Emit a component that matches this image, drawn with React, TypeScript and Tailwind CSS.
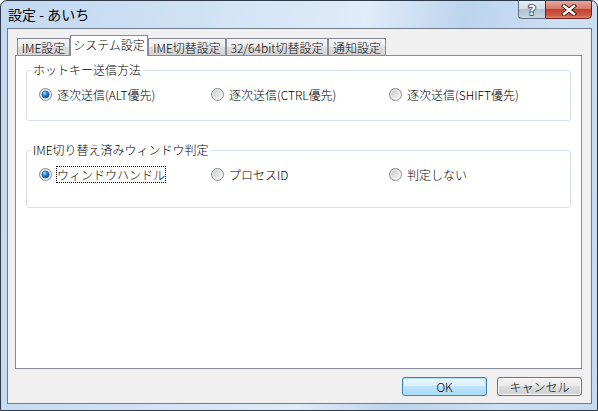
import React from "react";

const tabs = [
  { label: "IME設定", w: "w-[53px]" },
  { label: "システム設定", w: "w-[78px]", active: true },
  { label: "IME切替設定", w: "w-[78px]" },
  { label: "32/64bit切替設定", w: "w-[102px]" },
  { label: "通知設定", w: "w-[58px]" },
];

const Radio = ({ checked, id }: { checked?: boolean; id: string }) => (
  <svg width="13" height="13" viewBox="0 0 13 13" className="shrink-0">
    <defs>
      <linearGradient id={`bg-${id}`} x1="0" y1="0" x2="1" y2="1">
        <stop offset="0" stopColor="#d6d6d6" />
        <stop offset="1" stopColor="#ffffff" />
      </linearGradient>
      <linearGradient id={`in-${id}`} x1="0" y1="0" x2="1" y2="1">
        <stop offset="0" stopColor="#c9cdd2" />
        <stop offset="1" stopColor="#f4f4f4" />
      </linearGradient>
      <radialGradient id={`dot-${id}`} cx="0.35" cy="0.3" r="0.75">
        <stop offset="0" stopColor="#9fe0ff" />
        <stop offset="0.45" stopColor="#2c8ad8" />
        <stop offset="1" stopColor="#0c3f8a" />
      </radialGradient>
    </defs>
    <circle cx="6.5" cy="6.5" r="6" fill={`url(#bg-${id})`} stroke="#8c8f94" />
    {checked ? (
      <circle cx="6.5" cy="6.5" r="3.6" fill={`url(#dot-${id})`} stroke="#1b4f8f" strokeWidth="0.6" />
    ) : (
      <circle cx="6.5" cy="6.5" r="3.8" fill={`url(#in-${id})`} />
    )}
  </svg>
);

const Option = ({
  id,
  label,
  checked,
  focused,
  w,
}: {
  id: string;
  label: string;
  checked?: boolean;
  focused?: boolean;
  w?: string;
}) => (
  <div className={`flex items-center h-[13px] ${w ?? ""}`}>
    <Radio id={id} checked={checked} />
    <span
      className={
        focused
          ? "ml-[4px] leading-[15px] border border-dotted border-black"
          : "ml-[5px] leading-[15px]"
      }
    >
      {label}
    </span>
  </div>
);

const Group = ({
  title,
  h,
  mt,
  pt,
  children,
}: {
  title: string;
  h: string;
  mt: string;
  pt: string;
  children: React.ReactNode;
}) => (
  <fieldset className={`border border-[#d5dfe5] rounded-[3px] ${h} ${mt}`}>
    <legend className="ml-[4px] px-[2px] text-[12px] leading-[14px]">{title}</legend>
    <div className={`flex items-center pl-[12px] ${pt}`}>{children}</div>
  </fieldset>
);

export default function App() {
  return (
    <div className="w-[598px] h-[411px] flex flex-col border border-[#2d3a4b] rounded-t-[7px] bg-[linear-gradient(100deg,#c2d9f1_0%,#cfe2f5_30%,#dfecf9_55%,#bcd4ee_70%,#cde0f4_85%,#c4daf1_100%)] font-['Noto_Sans_CJK_JP',sans-serif] font-light text-[12px] text-black overflow-hidden">
      {/* title bar */}
      <div className="h-[27px] flex items-start shrink-0">
        <div className="ml-[7px] mt-[5px] text-[14px] leading-[16px] font-normal">設定 - あいち</div>
        <div className="ml-auto mr-[5px] -mt-[1px] flex">
          <div className="w-[27px] h-[19px] border border-[#5f7187] border-r-0 rounded-bl-[4px] bg-[linear-gradient(#e6edf4,#d0dbe6_45%,#b4c3d3_50%,#c7d4e1)] flex items-center justify-center">
            <svg width="14" height="14" viewBox="0 0 14 14">
              <text
                x="7"
                y="12"
                textAnchor="middle"
                fontFamily="DejaVu Sans, sans-serif"
                fontWeight="bold"
                fontSize="14"
                fill="#ffffff"
                stroke="#3a4a5e"
                strokeWidth="1.6"
                paintOrder="stroke"
              >
                ?
              </text>
            </svg>
          </div>
          <div className="w-[47px] h-[19px] border border-[#6b2419] rounded-br-[4px] bg-[linear-gradient(#e9a99b,#d6786a_45%,#c3412e_50%,#cf5d47_85%,#dc8c6e)] flex items-center justify-center">
            <svg width="16" height="12" viewBox="0 0 16 12">
              <path d="M3 2 L13 10 M13 2 L3 10" stroke="#3b1a16" strokeWidth="4.2" strokeLinecap="square" />
              <path d="M3 2 L13 10 M13 2 L3 10" stroke="#ffffff" strokeWidth="2.4" strokeLinecap="square" />
            </svg>
          </div>
        </div>
      </div>

      {/* client area */}
      <div className="flex-1 ml-[6px] mr-[5px] mb-[6px] border border-[#6e7a89] bg-[#f0f0f0] pl-[7px] pr-[9px] flex flex-col">
        <div className="h-[26px] flex items-end pl-[2px] shrink-0">
          {tabs.map((t) =>
            t.active ? (
              <div
                key={t.label}
                className={`${t.w} h-[21px] -mb-[1px] relative z-10 bg-white border border-[#898c95] border-b-0 flex justify-center pt-[1px] leading-[15px]`}
              >
                {t.label}
              </div>
            ) : (
              <div
                key={t.label}
                className={`${t.w} h-[17px] border border-[#898c95] border-b-0 bg-[linear-gradient(#f4f4f4,#ececec_50%,#dedede_50%,#d2d2d2)] flex items-center justify-center leading-[15px]`}
              >
                {t.label}
              </div>
            )
          )}
        </div>

        <div className="h-[314px] border border-[#898c95] bg-white px-[10px] pt-[7px] flex flex-col">
          <Group title="ホットキー送信方法" h="h-[58px]" mt="mt-0" pt="pt-[11px]">
            <Option id="a1" label="逐次送信(ALT優先)" checked w="w-[172px]" />
            <Option id="a2" label="逐次送信(CTRL優先)" w="w-[178px]" />
            <Option id="a3" label="逐次送信(SHIFT優先)" />
          </Group>
          <Group title="IME切り替え済みウィンドウ判定" h="h-[65px]" mt="mt-[22px]" pt="pt-[11px]">
            <Option id="b1" label="ウィンドウハンドル" checked focused w="w-[172px]" />
            <Option id="b2" label="プロセスID" w="w-[178px]" />
            <Option id="b3" label="判定しない" />
          </Group>
        </div>

        <div className="mt-[8px] flex justify-end gap-[10px]">
          <button className="w-[85px] h-[19px] rounded-[3px] border border-[#3c7fb1] bg-[linear-gradient(#eaf6fd,#d9f0fc_50%,#bee6fd_50%,#a7d9f5)] shadow-[inset_0_0_0_1px_#b6e3fa] text-[12px] leading-[15px]">
            OK
          </button>
          <button className="w-[85px] h-[19px] rounded-[3px] border border-[#707070] bg-[linear-gradient(#f2f2f2,#ebebeb_50%,#dddddd_50%,#cfcfcf)] shadow-[inset_0_0_0_1px_#fcfcfc] text-[12px] leading-[15px]">
            キャンセル
          </button>
        </div>
      </div>
    </div>
  );
}
